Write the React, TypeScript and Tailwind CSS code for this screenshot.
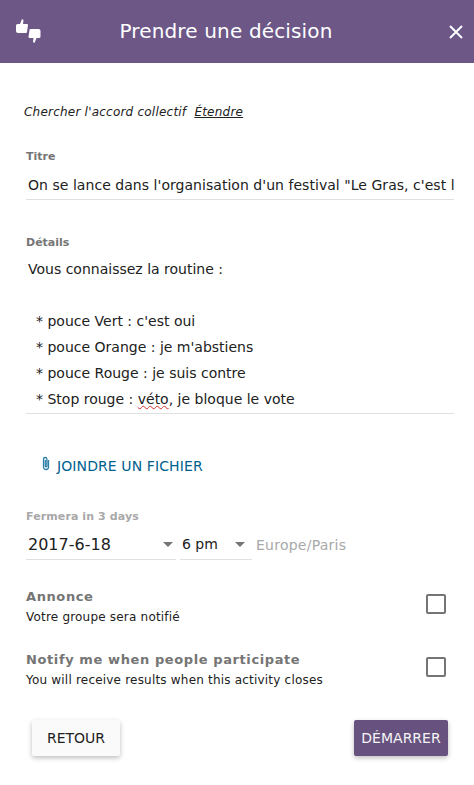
const font = { fontFamily: '"DejaVu Sans", sans-serif' };

function Logo() {
  return (
    <svg width="26" height="26" viewBox="0 0 26 26" className="fill-white">
      <path d="M1 7.500Q1 6 2.500 6H5L7 1 8.500 2 8 6H12Q13 6 13 7L12 14Q12 15 11 15H3Q1 15 1 13Z" />
      <path d="M25.500 18.500Q25.500 20 24 20H21.500L19.500 25 18 24 18.500 20H14.500Q13.500 20 13.500 19L14.500 12Q14.500 11 15.500 11H23.500Q25.500 11 25.500 13Z" />
    </svg>
  );
}

function Caret() {
  return <span className="w-0 h-0 border-x-[5px] border-x-transparent border-t-[5px] border-t-[#757575]" />;
}

function CheckRow({ title, sub, className }: { title: string; sub: string; className: string }) {
  return (
    <div className={`flex items-center justify-between pr-[8px] ${className}`}>
      <div>
        <div className="text-[13px] leading-[20px] font-bold tracking-[0.6px] text-[#757575]">{title}</div>
        <div className="text-[12px] leading-[20px] tracking-[0.2px] text-[#212121]">{sub}</div>
      </div>
      <span className="w-5 h-5 -mt-[6px] border-2 border-[#757575] rounded-[2px]" />
    </div>
  );
}

export default function App() {
  return (
    <div className="w-[474px] h-[785px] bg-white flex flex-col overflow-hidden" style={font}>
      <header className="h-[63px] shrink-0 bg-[#6c5787] text-white flex items-center pl-[15px] pr-[10px]">
        <span className="-mt-[1px]"><Logo /></span>
        <h1 className="flex-1 text-center text-[20px] leading-[26px] -mt-[2px] tracking-[0.15px] pr-[37px]">Prendre une décision</h1>
        <svg width="16" height="16" viewBox="0 0 16 16" className="stroke-white" strokeWidth="2">
          <path d="M2 2l12 12M14 2L2 14" />
        </svg>
      </header>

      <main className="flex-1 flex flex-col pl-[26px] pr-[20px]">
        <p className="mt-[40px] -ml-[2px] text-[12px] leading-[18px] italic tracking-[0.22px] text-[#212121]">
          Chercher l'accord collectif&nbsp; <span className="underline">Étendre</span>
        </p>

        <label className="mt-[29px] text-[11px] leading-[14px] font-bold text-[#757575]">Titre</label>
        <div className="mt-[8px] pl-[2px] h-[28px] border-b border-[#e0e0e0] text-[14px] leading-[26px] tracking-[0.04px] text-[#212121] whitespace-nowrap overflow-hidden">
          On se lance dans l'organisation d'un festival "Le Gras, c'est la vie"
        </div>

        <label className="mt-[36px] text-[11px] leading-[14px] font-bold text-[#757575]">Détails</label>
        <div className="mt-[6px] pl-[2px] pb-[1px] border-b border-[#e0e0e0] text-[14px] leading-[26px] text-[#212121]">
          <div>Vous connaissez la routine :</div>
          <div className="h-[26px]" />
          <div className="pl-[8px]">* pouce Vert : c'est oui</div>
          <div className="pl-[8px]">* pouce Orange : je m'abstiens</div>
          <div className="pl-[8px]">* pouce Rouge : je suis contre</div>
          <div className="pl-[8px]">* Stop rouge : <span className="underline decoration-wavy decoration-[#d32f2f] decoration-[1px]">véto</span>, je bloque le vote</div>
        </div>

        <button className="mt-[40px] ml-[15px] flex items-center gap-[6px] text-[14px] leading-[24px] tracking-[0.1px] text-[#00618f] self-start">
          <svg width="10" height="15" viewBox="0 0 10 15" fill="none" stroke="#2c7fa8" strokeWidth="1.3" className="-mt-[6px]">
            <path d="M7.500 4v7a2.500 2.500 0 0 1-5 0V3.200a1.700 1.700 0 0 1 3.400 0V10a.8.8 0 0 1-1.600 0V4" />
          </svg>
          JOINDRE UN FICHIER
        </button>

        <label className="mt-[32px] text-[11px] leading-[14px] font-bold tracking-[0.1px] text-[#a8a8a8]">Fermera in 3 days</label>
        <div className="mt-[6px] flex items-stretch text-[#212121]">
          <div className="w-[150px] h-[30px] border-b border-[#e0e0e0] flex items-center justify-between pl-[2px] pr-[3px] text-[16px]">
            <span>2017-6-18</span><Caret />
          </div>
          <div className="ml-[4px] w-[72px] h-[30px] border-b border-[#e0e0e0] flex items-center justify-between pl-[2px] pr-[7px] text-[14px]">
            <span>6 pm</span><Caret />
          </div>
          <span className="ml-[4px] h-[30px] flex items-center text-[14px] tracking-[0.25px] text-[#a8a8a8]">Europe/Paris</span>
        </div>

        <CheckRow className="mt-[27px]" title="Annonce" sub="Votre groupe sera notifié" />
        <CheckRow className="mt-[23px]" title="Notify me when people participate" sub="You will receive results when this activity closes" />

        <div className="mt-[30px] pl-[6px] pr-[6px] flex justify-between">
          <button className="w-[88px] h-[36px] rounded-[2px] bg-[#fafafa] text-[14px] text-[#212121] shadow-[0_2px_5px_rgba(0,0,0,0.26)]">RETOUR</button>
          <button className="w-[94px] h-[36px] rounded-[2px] bg-[#67517f] text-[14px] text-[#f5f5f5] shadow-[0_2px_5px_rgba(0,0,0,0.26)]">DÉMARRER</button>
        </div>
      </main>
    </div>
  );
}
